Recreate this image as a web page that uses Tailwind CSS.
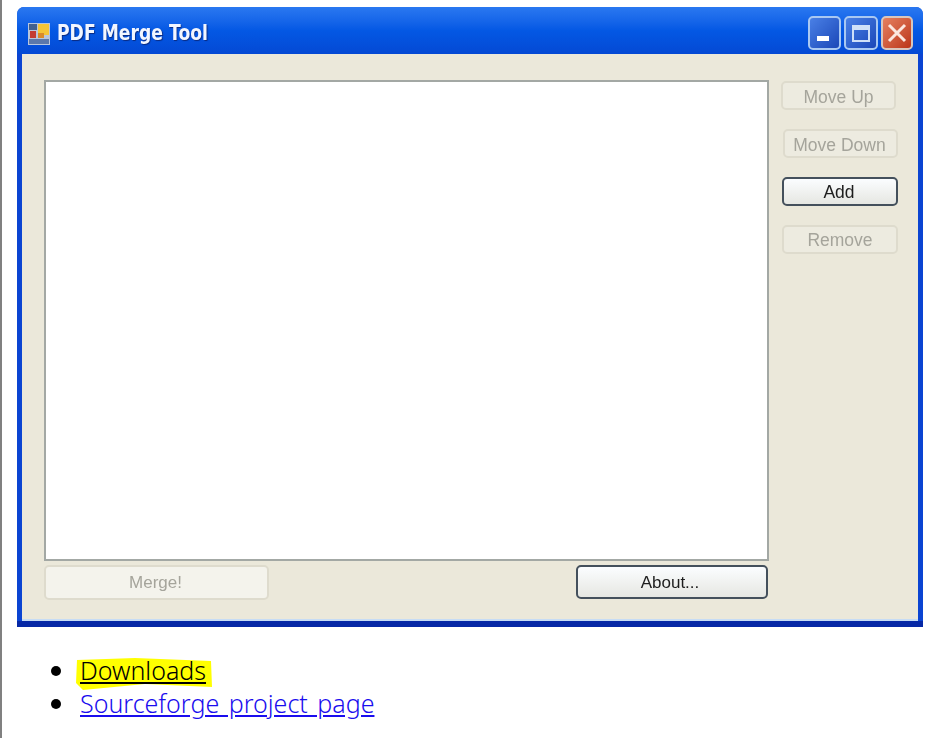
<!DOCTYPE html>
<html lang="en">
<head>
    <meta charset="UTF-8">
    <title>PDF Merge Tool</title>
    <script src="https://cdn.jsdelivr.net/npm/@tailwindcss/browser@4"></script>
</head>
<body class="bg-white w-[936px] h-[738px] overflow-hidden border-l-2 border-l-[#808080] font-['Noto_Sans','Noto_Sans_CJK_KR',sans-serif]">
    <!-- Application window screenshot -->
    <section class="ml-[15px] mt-[7px] w-[906px] h-[620px] flex flex-col rounded-t-[7px] bg-[#0b44d2] border-b-[6px] border-b-[#0628a6] blur-[0.5px] font-['Liberation_Sans',sans-serif]">
        <!-- Title bar -->
        <header class="h-[47px] shrink-0 flex items-center pl-[11px] pr-[10px] rounded-t-[7px] bg-gradient-to-b from-[#2a78f0] via-[#0458e4] to-[#0449d4]">
            <svg class="w-[22px] h-[22px] shrink-0 mt-[6px]" viewBox="0 0 22 22">
                <rect x="0" y="0" width="22" height="22" fill="#b9c6dc"/>
                <rect x="1" y="1" width="8" height="6" fill="#41608f"/>
                <rect x="10" y="1" width="11" height="11" fill="#f4c437"/>
                <rect x="2" y="8" width="6" height="7" fill="#c43c33"/>
                <rect x="10" y="10" width="6" height="5" fill="#d98a2a"/>
                <rect x="1" y="16" width="20" height="5" fill="#5b78ab"/>
            </svg>
            <h1 class="ml-[7px] mt-[5px] text-[21px] leading-none font-bold whitespace-nowrap text-[#f2f6ff] font-['DejaVu_Sans',sans-serif] [text-shadow:1px_1px_1px_#0a2a80] scale-x-[0.82] origin-left">PDF Merge Tool</h1>
            <!-- Window controls -->
            <div class="ml-auto mt-[5px] flex">
                <div class="w-[33px] h-[34px] rounded-[5px] border-2 border-[#a9c8f2] bg-gradient-to-br from-[#4a80e6] to-[#1c47b8] flex items-end pl-[7px] pb-[7px]">
                    <div class="w-[12px] h-[5px] bg-white"></div>
                </div>
                <div class="ml-[3px] w-[34px] h-[34px] rounded-[5px] border-2 border-[#a9c8f2] bg-gradient-to-br from-[#4a80e6] to-[#1c47b8] flex items-center justify-center">
                    <div class="w-[18px] h-[17px] border-2 border-t-[5px] border-[#cfe0f8]"></div>
                </div>
                <div class="ml-[3px] w-[32px] h-[34px] rounded-[5px] border-2 border-[#d9c6bd] bg-gradient-to-br from-[#e5805f] to-[#bb3418] flex items-center justify-center">
                    <svg class="w-[20px] h-[20px]" viewBox="0 0 20 20"><path d="M2 2 L18 18 M18 2 L2 18" stroke="#fbe8e0" stroke-width="3"/></svg>
                </div>
            </div>
        </header>

        <!-- Client area -->
        <div class="flex-1 ml-[5px] mr-[5px] pl-[22px] pr-[20px] pt-[26px] bg-[#ebe8da] flex gap-[12px] border-b-2 border-b-[#c6dcf5]">
            <div class="w-[726px] flex flex-col">
                <div class="h-[481px] bg-white border-2 border-[#a3a8a4]"></div>
                <div class="mt-[4px] flex justify-between pr-[1px] text-[17px]">
                    <button class="w-[225px] h-[35px] pr-[2px] rounded-[5px] border-2 border-[#dedbcd] bg-[#f4f3ec] text-[#a5a49b]">Merge!</button>
                    <button class="w-[192px] h-[34px] pr-[4px] pt-[1px] rounded-[5px] border-2 border-[#44505c] bg-gradient-to-b from-[#fbfdff] to-[#e6e7e2] text-[#1d1d1d]">About...</button>
                </div>
            </div>
            <!-- Side buttons -->
            <div class="w-[117px] pt-[1px] flex flex-col gap-[19px] text-[17.5px] items-start">
                <button class="w-[115px] h-[29px] pt-[1px] rounded-[5px] border-2 border-[#dedbcd] bg-[#edebe0] text-[#a5a49b]">Move Up</button>
                <button class="ml-[2px] w-[115px] h-[29px] pt-[1px] pr-[2px] rounded-[5px] border-2 border-[#dedbcd] bg-[#edebe0] text-[#a5a49b]">Move Down</button>
                <button class="ml-[1px] w-[116px] h-[29px] pb-[1px] pr-[2px] rounded-[5px] border-2 border-[#44505c] bg-gradient-to-b from-[#fbfdff] to-[#e6e7e2] text-[#1d1d1d]">Add</button>
                <button class="ml-[1px] w-[116px] h-[29px] rounded-[5px] border-2 border-[#dedbcd] bg-[#edebe0] text-[#a5a49b]">Remove</button>
            </div>
        </div>
    </section>

    <!-- Links -->
    <ul class="mt-[27px] ml-[49px] text-[25px] leading-[33px] font-light [word-spacing:3px]">
        <li class="flex items-center gap-[19px]">
            <span class="w-[10px] h-[10px] rounded-full bg-black"></span>
            <span class="relative">
                <!-- Marker pen highlight drawn over the screenshot -->
                <svg class="absolute left-[-5px] top-[3px] w-[138px] h-[34px]" viewBox="0 0 138 34"><path d="M2 3 L60 1 L136 4 L137 30 L70 27 L8 33 L1 26 Z" fill="#ffff00"/></svg>
                <a href="#" class="relative underline text-black">Downloads</a>
            </span>
        </li>
        <li class="relative flex items-center gap-[19px]">
            <span class="w-[10px] h-[10px] rounded-full bg-black"></span>
            <a href="#" class="underline text-[#1a0dee]">Sourceforge project page</a>
        </li>
    </ul>
</body>
</html>
